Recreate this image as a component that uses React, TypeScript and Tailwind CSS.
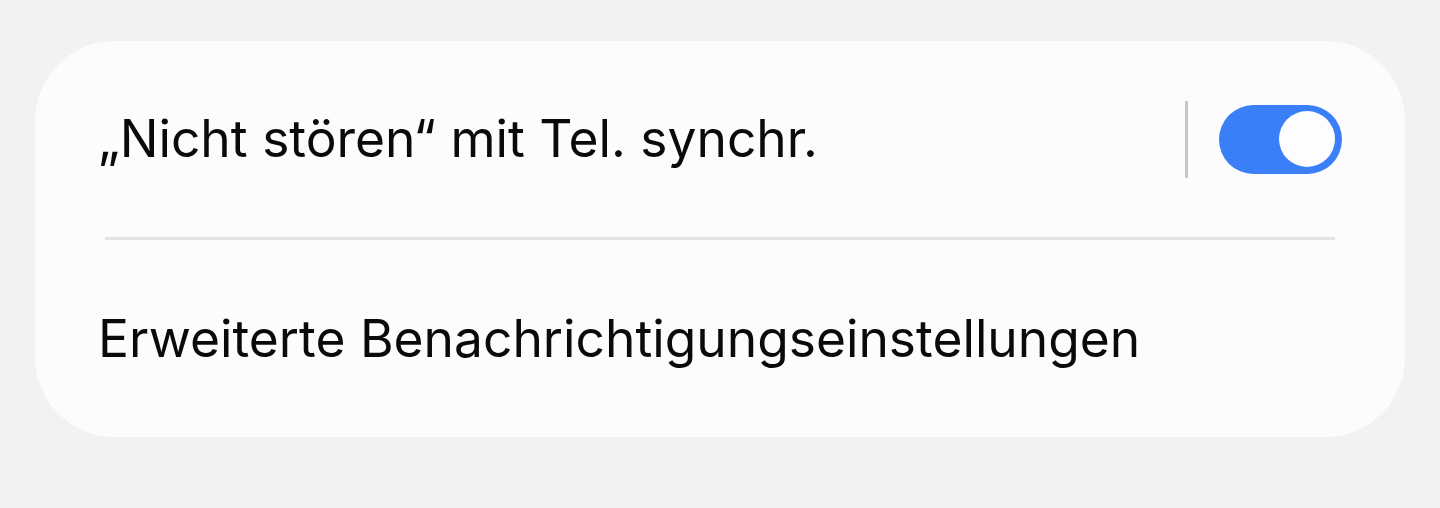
export default function App() {
  return (
    <div className="min-h-[508px] w-full bg-[#f2f2f4] pt-[41px] px-[35px] font-['Inter','Noto_Sans',sans-serif] text-[#0a0a0a]">
      <div className="flex flex-col rounded-[80px] bg-[#fcfcfe]">
        {/* Sync row */}
        <div className="flex h-[196px] items-center pl-[63px] pr-[63px]">
          <span className="flex-1 text-[51.5px] leading-none">„Nicht stören“ mit Tel. synchr.</span>
          <div className="h-[77px] w-[3px] bg-[#c8c8ca]" />
          <div className="ml-[31px] flex h-[69px] w-[123px] items-center justify-end rounded-full bg-[#3a7ef8] pr-[7px]">
            <div className="h-[56px] w-[56px] rounded-full bg-[#fdfdff]" />
          </div>
        </div>

        <div className="mx-[70px] h-[3px] bg-[#e3e3e5]" />

        {/* Advanced settings row */}
        <div className="flex h-[197px] items-center pl-[63px]">
          <span className="text-[51.5px] leading-none">Erweiterte Benachrichtigungseinstellungen</span>
        </div>
      </div>
    </div>
  )
}
